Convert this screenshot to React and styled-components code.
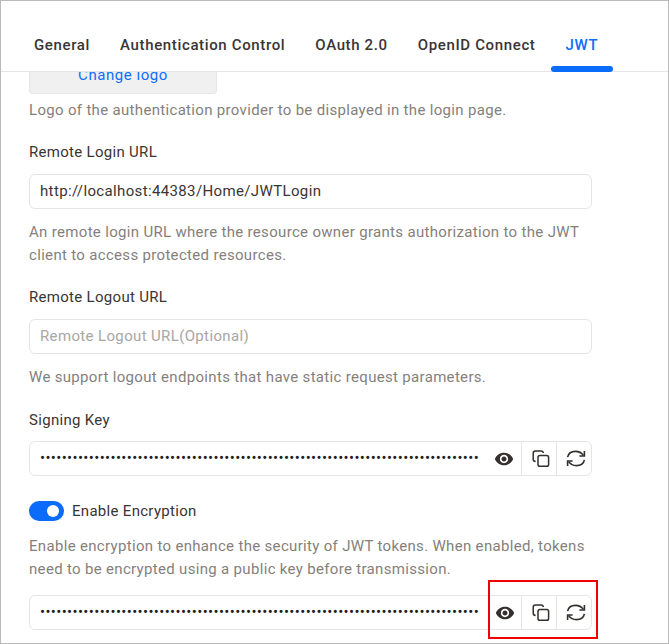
import React from "react";
import styled, { createGlobalStyle } from "styled-components";
import { MdVisibility } from "react-icons/md";

const GlobalStyle = createGlobalStyle`
  html, body {
    margin: 0;
    padding: 0;
    background: #ffffff;
    font-family: Roboto, "Liberation Sans", sans-serif;
  }
`;

const Frame = styled.div`
  width: 669px;
  height: 644px;
  box-sizing: border-box;
  border: 1px solid #b9b9b9;
  background: #fff;
  overflow: hidden;
  display: flex;
  flex-direction: column;
`;

const TabBar = styled.div`
  flex: none;
  height: 71px;
  box-sizing: border-box;
  border-bottom: 1px solid #e5e5e5;
  display: flex;
  align-items: flex-end;
  padding-left: 18px;
`;

const Tab = styled.div`
  height: 52px;
  box-sizing: border-box;
  padding: 16px 15px 0;
  margin-bottom: -1px;
  font-size: 15px;
  line-height: 18px;
  font-weight: 500;
  letter-spacing: 0.64px;
  color: ${(p) => (p.$active ? "#0d6efd" : "#3a3533")};
  position: relative;
  &::after {
    content: "";
    display: ${(p) => (p.$active ? "block" : "none")};
    position: absolute;
    left: 0;
    right: 0;
    bottom: 0;
    height: 6px;
    border-radius: 3px;
    background: #0b6bfb;
  }
`;

const Content = styled.div`
  flex: 1;
  overflow: hidden;
  padding: 0 28px;
`;

const LogoButton = styled.div`
  width: 188px;
  height: 22px;
  box-sizing: border-box;
  background: #f0f0f0;
  border: 1px solid #e6e6e6;
  border-top: 0;
  border-radius: 0 0 4px 4px;
  color: #0d6efd;
  font-size: 15px;
  letter-spacing: 0.55px;
  text-align: center;
  overflow: hidden;
  display: flex;
  align-items: flex-start;
  justify-content: center;
  & > span {
    display: block;
    line-height: 18px;
    margin-top: -6px;
  }
`;

const Hint = styled.p`
  margin: ${(p) => p.$top || 12}px 0 0;
  width: 563px;
  font-size: 15px;
  line-height: 23px;
  letter-spacing: 0.32px;
  color: #857f7c;
`;

const Label = styled.div`
  margin-top: ${(p) => p.$top || 20}px;
  font-size: 15px;
  line-height: 20px;
  letter-spacing: 0.3px;
  color: #3a3533;
`;

const Field = styled.div`
  margin-top: ${(p) => p.$top || 12}px;
  width: 563px;
  height: 35px;
  box-sizing: border-box;
  border: 1px solid #e5e5e5;
  border-radius: 6px;
  display: flex;
  align-items: stretch;
  background: #fff;
`;

const FieldText = styled.div`
  flex: 1;
  min-width: 0;
  padding-left: 10px;
  font-size: 15px;
  line-height: 33px;
  letter-spacing: 0.36px;
  color: ${(p) => (p.$placeholder ? "#a9a6a4" : "#3a3533")};
  white-space: nowrap;
`;

const Dots = styled.div`
  flex: none;
  margin-left: 10px;
  white-space: nowrap;
  font-size: 15px;
  letter-spacing: 0.36px;
  line-height: 33px;
  color: #1f1c1b;
`;

const Spacer = styled.div`
  flex: 1;
`;

const IconCell = styled.div`
  flex: none;
  width: ${(p) => p.$w || 35}px;
  box-sizing: border-box;
  display: flex;
  align-items: center;
  justify-content: center;
  padding-left: ${(p) => p.$nudge || 0}px;
  border-left: ${(p) => (p.$plain ? "0" : "1px solid #e5e5e5")};
  color: #33302e;
`;

const ToggleRow = styled.div`
  margin-top: 25px;
  display: flex;
  align-items: center;
  gap: 8px;
  height: 20px;
`;

const Toggle = styled.div`
  width: 35px;
  height: 20px;
  border-radius: 10px;
  background: #0b6bfb;
  display: flex;
  align-items: center;
  justify-content: flex-end;
  padding-right: 5px;
  box-sizing: border-box;
  &::after {
    content: "";
    width: 12px;
    height: 12px;
    border-radius: 50%;
    background: #fff;
  }
`;

const ToggleText = styled.span`
  font-size: 15px;
  letter-spacing: 0.3px;
  color: #3a3533;
`;

const Highlight = styled.div`
  position: absolute;
  left: 488px;
  top: 580px;
  width: 110px;
  height: 59px;
  box-sizing: border-box;
  border: 2px solid #f00000;
`;

function CopyIcon() {
  return (
    <svg width="18" height="17" viewBox="0 0 18 17" fill="none" stroke="currentColor" strokeWidth="1.5">
      <rect x="6" y="5.6" width="10.6" height="10.6" rx="1.8" />
      <path d="M3.6 11.6 C2.2 11.4 1.2 10.5 1.2 9.2 V3.2 C1.2 1.9 2.1 1 3.4 1 H9 C10.3 1 11.2 1.9 11.3 3" />
    </svg>
  );
}

function SyncIcon() {
  return (
    <svg width="20" height="17" viewBox="0 0 20 17" fill="none" stroke="currentColor" strokeWidth="1.6">
      <path d="M1.6 7.2 C2.3 3.8 5.4 1.4 9.6 1.4 C13 1.4 15.6 2.9 17.4 5.4" />
      <path d="M18.4 1 V6 H13.4" />
      <path d="M18.4 9.8 C17.7 13.2 14.6 15.6 10.4 15.6 C7 15.6 4.4 14.1 2.6 11.6" />
      <path d="M1.6 16 V11 H6.6" />
    </svg>
  );
}

function SecretField({ top, nudge }) {
  return (
    <Field $top={top}>
      <Dots>{"•".repeat(81)}</Dots>
      <Spacer />
      <IconCell $plain $w={34} $nudge={nudge}>
        <MdVisibility size={20} />
      </IconCell>
      <IconCell $nudge={3}>
        <CopyIcon />
      </IconCell>
      <IconCell $nudge={3}>
        <SyncIcon />
      </IconCell>
    </Field>
  );
}

export default function App() {
  return (
    <>
      <GlobalStyle />
      <Frame>
        <TabBar>
          <Tab>General</Tab>
          <Tab>Authentication Control</Tab>
          <Tab>OAuth 2.0</Tab>
          <Tab>OpenID Connect</Tab>
          <Tab $active>JWT</Tab>
        </TabBar>
        <Content>
          <LogoButton>
            <span>Change logo</span>
          </LogoButton>
          <Hint $top={5}>Logo of the authentication provider to be displayed in the login page.</Hint>
          <Label>Remote Login URL</Label>
          <Field>
            <FieldText>http://localhost:44383/Home/JWTLogin</FieldText>
          </Field>
          <Hint>An remote login URL where the resource owner grants authorization to the JWT client to access protected resources.</Hint>
          <Label>Remote Logout URL</Label>
          <Field>
            <FieldText $placeholder>Remote Logout URL(Optional)</FieldText>
          </Field>
          <Hint>We support logout endpoints that have static request parameters.</Hint>
          <Label $top={21}>Signing Key</Label>
          <SecretField top={11} />
          <ToggleRow>
            <Toggle />
            <ToggleText>Enable Encryption</ToggleText>
          </ToggleRow>
          <Hint $top={14}>Enable encryption to enhance the security of JWT tokens. When enabled, tokens need to be encrypted using a public key before transmission.</Hint>
          <SecretField top={14} nudge={2} />
        </Content>
      </Frame>
      <Highlight />
    </>
  );
}
